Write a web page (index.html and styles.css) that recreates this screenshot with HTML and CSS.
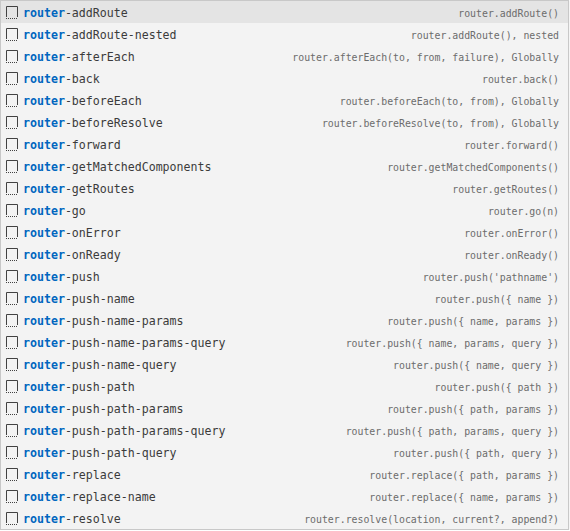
FILE: index.html
```html
<!DOCTYPE html>
<html lang="en">
<head>
    <meta charset="UTF-8">
    <title>Suggestions</title>
    <link rel="stylesheet" href="styles.css">
</head>
<body>
    <div class="suggest-widget">
        <ul id="suggestList" class="suggest-list"></ul>
    </div>

    <script>
        // Snippet entries shown in the widget
        const items = [
            ['addRoute', 'router.addRoute()'],
            ['addRoute-nested', 'router.addRoute(), nested'],
            ['afterEach', 'router.afterEach(to, from, failure), Globally'],
            ['back', 'router.back()'],
            ['beforeEach', 'router.beforeEach(to, from), Globally'],
            ['beforeResolve', 'router.beforeResolve(to, from), Globally'],
            ['forward', 'router.forward()'],
            ['getMatchedComponents', 'router.getMatchedComponents()'],
            ['getRoutes', 'router.getRoutes()'],
            ['go', 'router.go(n)'],
            ['onError', 'router.onError()'],
            ['onReady', 'router.onReady()'],
            ['push', "router.push('pathname')"],
            ['push-name', 'router.push({ name })'],
            ['push-name-params', 'router.push({ name, params })'],
            ['push-name-params-query', 'router.push({ name, params, query })'],
            ['push-name-query', 'router.push({ name, query })'],
            ['push-path', 'router.push({ path })'],
            ['push-path-params', 'router.push({ path, params })'],
            ['push-path-params-query', 'router.push({ path, params, query })'],
            ['push-path-query', 'router.push({ path, query })'],
            ['replace', 'router.replace({ path, params })'],
            ['replace-name', 'router.replace({ name, params })'],
            ['resolve', 'router.resolve(location, current?, append?)']
        ];

        const list = document.getElementById('suggestList');
        const icon = '<svg class="snippet-icon" width="14" height="14" viewBox="0 0 14 14">' +
            '<path d="M1.5 12 V1.5 H12.5 V12" fill="none" stroke="#424242" stroke-width="1"/>' +
            '<path d="M1 13.5 H13" fill="none" stroke="#424242" stroke-width="1" stroke-dasharray="1 1"/>' +
            '</svg>';

        items.forEach(([name, detail], i) => {
            const li = document.createElement('li');
            li.className = 'suggest-row' + (i === 0 ? ' focused' : '');
            li.innerHTML = icon +
                '<span class="label"><span class="match">router</span>-' + name + '</span>' +
                '<span class="detail">' + detail + '</span>';
            list.appendChild(li);
        });
    </script>
</body>
</html>
```

FILE: styles.css
```css
body {
    margin: 0;
    background-color: #ffffff;
}
.suggest-widget {
    width: 567px;
    background-color: #f3f3f3;
    border: 1px solid #c8c8c8;
    box-shadow: 0 0 2px rgba(0, 0, 0, 0.12);
}
.suggest-list {
    list-style: none;
    margin: 0;
    padding: 0;
}
.suggest-row {
    display: flex;
    align-items: center;
    height: 22px;
    padding: 0 9px 0 4px;
    font-family: "DejaVu Sans Mono", monospace;
    color: #3b3b3b;
}
.suggest-row.focused {
    background-color: #e4e4e4;
}
.snippet-icon {
    flex: none;
    margin-right: 4px;
}
.label {
    padding-top: 2px;
    font-size: 11.6px;
    white-space: nowrap;
}
.match {
    color: #0066bf;
    font-weight: bold;
}
.detail {
    margin-left: auto;
    padding-top: 2px;
    font-size: 9.85px;
    color: #6c6c6c;
    white-space: nowrap;
}
```
